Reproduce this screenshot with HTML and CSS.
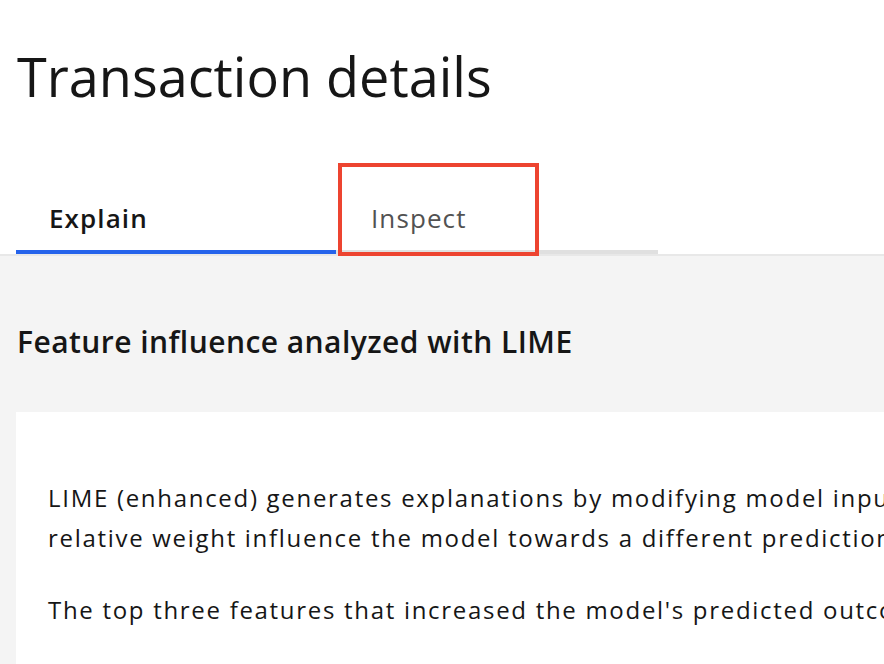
FILE: index.html
```html
<!DOCTYPE html>
<html lang="en">
<head>
<meta charset="utf-8">
<title>Transaction details</title>
<link rel="stylesheet" href="styles.css">
</head>
<body>
  <header class="page-header">
    <h1 class="page-title">Transaction details</h1>
  </header>
  <nav class="tabs">
    <div class="tab tab--active">Explain</div>
    <div class="tab tab--highlighted">Inspect<span class="highlight-box"></span></div>
  </nav>
  <main class="panel">
    <h2 class="panel-title">Feature influence analyzed with LIME</h2>
    <section class="card">
      <p class="card-text">LIME (enhanced) generates explanations by modifying model inputs and measuring how features of<br>relative weight influence the model towards a different prediction.</p>
      <p class="card-text">The top three features that increased the model's predicted outcome are shown below.</p>
    </section>
  </main>
</body>
</html>
```
FILE: styles.css
```css
html, body {
  margin: 0;
  padding: 0;
  background: #ffffff;
  color: #161616;
  font-family: "Open Sans", "Liberation Sans", sans-serif;
}

body {
  height: 664px;
  overflow: hidden;
}

.page-header {
  padding: 44px 16px 0 17px;
}

.page-title {
  margin: 0;
  font-size: 54px;
  line-height: 64px;
  font-weight: 400;
  letter-spacing: 0;
  color: #161616;
}

.tabs {
  display: flex;
  padding: 0 16px;
  margin-top: 55px;
  border-bottom: 2px solid #e8e8e8;
}

.tab {
  position: relative;
  width: 320px;
  box-sizing: border-box;
  height: 91px;
  padding: 0 0 16px 33px;
  display: flex;
  align-items: flex-end;
  font-size: 26px;
  line-height: 32px;
  letter-spacing: 1.1px;
  color: #525252;
  border-bottom: 4px solid #e0e0e0;
}

.tab--active {
  font-weight: 600;
  color: #161616;
  letter-spacing: 1.1px;
  border-bottom: 4px solid #2563eb;
}

.tab--highlighted {
  width: 322px;
  padding-left: 35px;
}

.highlight-box {
  position: absolute;
  left: 2px;
  top: 0;
  width: 201px;
  height: 93px;
  box-sizing: border-box;
  border: 4px solid #ed4430;
  pointer-events: none;
}

.panel {
  background: #f4f4f4;
  padding: 66px 0 0 16px;
  height: 342px;
  overflow: hidden;
}

.panel-title {
  margin: 0 0 50px 1px;
  font-size: 30px;
  line-height: 40px;
  font-weight: 600;
  letter-spacing: 0.45px;
  color: #161616;
}

.card {
  background: #ffffff;
  padding: 66px 0 40px 32px;
  overflow: hidden;
}

.card-text {
  margin: 0 0 32px 0;
  font-size: 24px;
  line-height: 40px;
  letter-spacing: 1.7px;
  white-space: nowrap;
  color: #161616;
}
```
